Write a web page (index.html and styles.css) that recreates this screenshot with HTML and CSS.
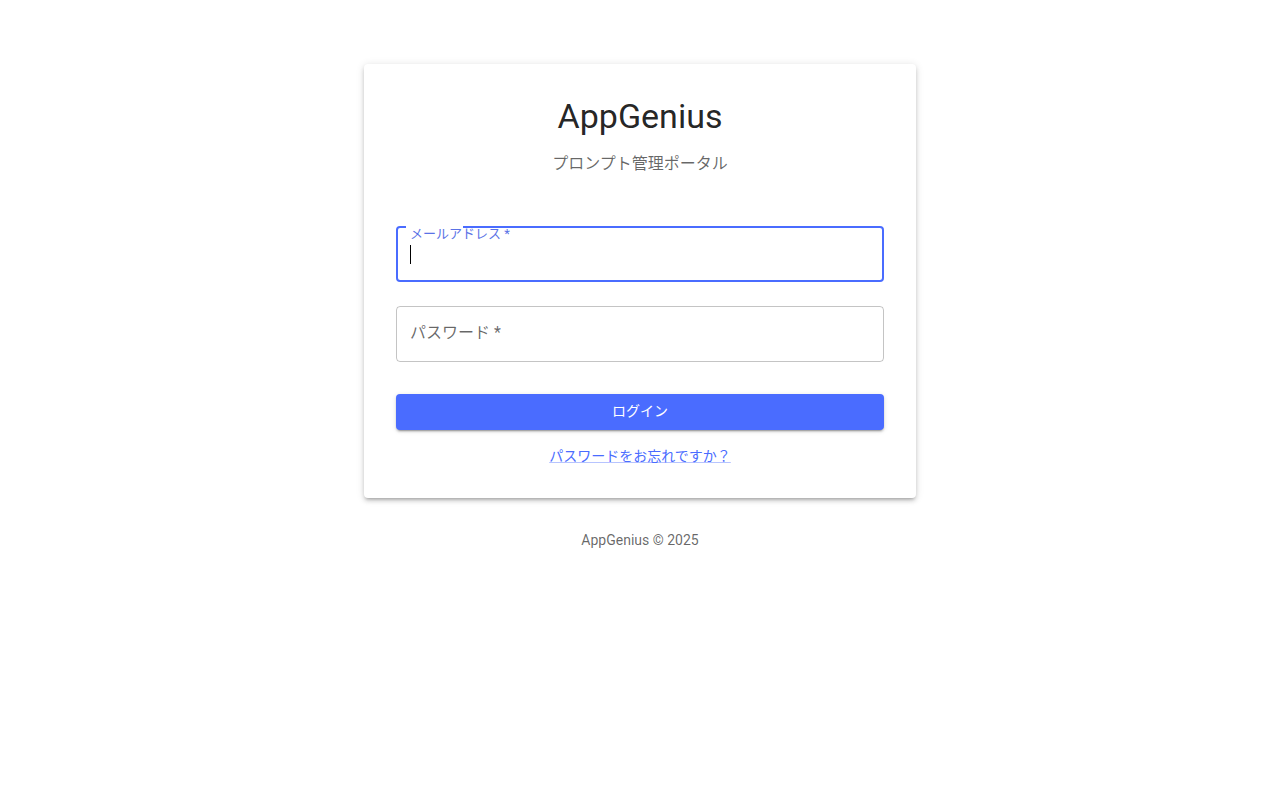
FILE: index.html
```html
<!DOCTYPE html>
<html lang="ja">
<head>
<meta charset="utf-8">
<title>AppGenius - ログイン</title>
<link rel="stylesheet" href="styles.css">
</head>
<body>
<main class="container">
  <div class="card">
    <h1 class="title">AppGenius</h1>
    <p class="subtitle">プロンプト管理ポータル</p>
    <form class="form">
      <div class="field field-focused">
        <label class="label-shrunk">メールアドレス *</label>
        <span class="notch"></span>
        <span class="caret"></span>
      </div>
      <div class="field">
        <label class="label-rest">パスワード *</label>
      </div>
      <button type="button" class="btn">ログイン</button>
      <div class="link-row"><a class="link" href="#">パスワードをお忘れですか？</a></div>
    </form>
  </div>
  <p class="footer">AppGenius © 2025</p>
</main>
</body>
</html>
```
FILE: styles.css
```css
* { box-sizing: border-box; }
html, body { margin: 0; padding: 0; background: #fff; }
body {
  font-family: Roboto, "Noto Sans CJK JP", sans-serif;
  color: rgba(0,0,0,0.87);
}
.container {
  width: 600px;
  margin: 64px auto 0;
  padding: 0 24px;
}
.card {
  background: #fff;
  border-radius: 4px;
  box-shadow: 0px 3px 3px -2px rgba(0,0,0,0.2), 0px 3px 4px 0px rgba(0,0,0,0.14), 0px 1px 8px 0px rgba(0,0,0,0.12);
  padding: 32px;
}
.title {
  margin: 0 0 16px;
  font-size: 34px;
  font-weight: 400;
  line-height: 40px;
  text-align: center;
  color: rgba(0,0,0,0.87);
}
.subtitle {
  margin: 0 0 34px;
  font-size: 16px;
  line-height: 24px;
  text-align: center;
  color: rgba(0,0,0,0.6);
}
.form { display: flex; flex-direction: column; }
.field {
  position: relative;
  height: 56px;
  margin: 16px 0 8px;
  border: 1px solid rgba(0,0,0,0.23);
  border-radius: 4px;
}
.field-focused {
  border: 2px solid #4a6cff;
}
.notch {
  position: absolute;
  left: 8px;
  top: -2px;
  width: 57px;
  height: 2px;
  background: #fff;
}
.label-shrunk {
  position: absolute;
  left: 12px;
  top: -2px;
  font-size: 13px;
  line-height: 16px;
  color: #5a72e6;
  z-index: 1;
}
.caret {
  position: absolute;
  left: 12px;
  top: 17px;
  width: 1px;
  height: 19px;
  background: #000;
}
.label-rest {
  position: absolute;
  left: 13px;
  top: 14px;
  font-size: 16px;
  line-height: 23px;
  color: rgba(0,0,0,0.6);
}
.btn {
  margin-top: 24px;
  height: 36px;
  border: 0;
  border-radius: 4px;
  background: #4a6cff;
  color: #fff;
  font-family: Roboto, "Noto Sans CJK JP", sans-serif;
  font-size: 14px;
  font-weight: 400;
  line-height: 34px;
  padding: 0 0 2px;
  box-shadow: 0px 3px 1px -2px rgba(0,0,0,0.2), 0px 2px 2px 0px rgba(0,0,0,0.14), 0px 1px 5px 0px rgba(0,0,0,0.12);
  cursor: pointer;
}
.link-row {
  margin-top: 16px;
  text-align: center;
  line-height: 20px;
}
.link {
  font-size: 14px;
  color: #4a6cff;
  text-decoration: underline;
  text-decoration-color: rgba(74,108,255,0.4);
}
.footer {
  margin: 32px 0 0;
  text-align: center;
  font-size: 14px;
  line-height: 20px;
  color: rgba(0,0,0,0.6);
}
```
